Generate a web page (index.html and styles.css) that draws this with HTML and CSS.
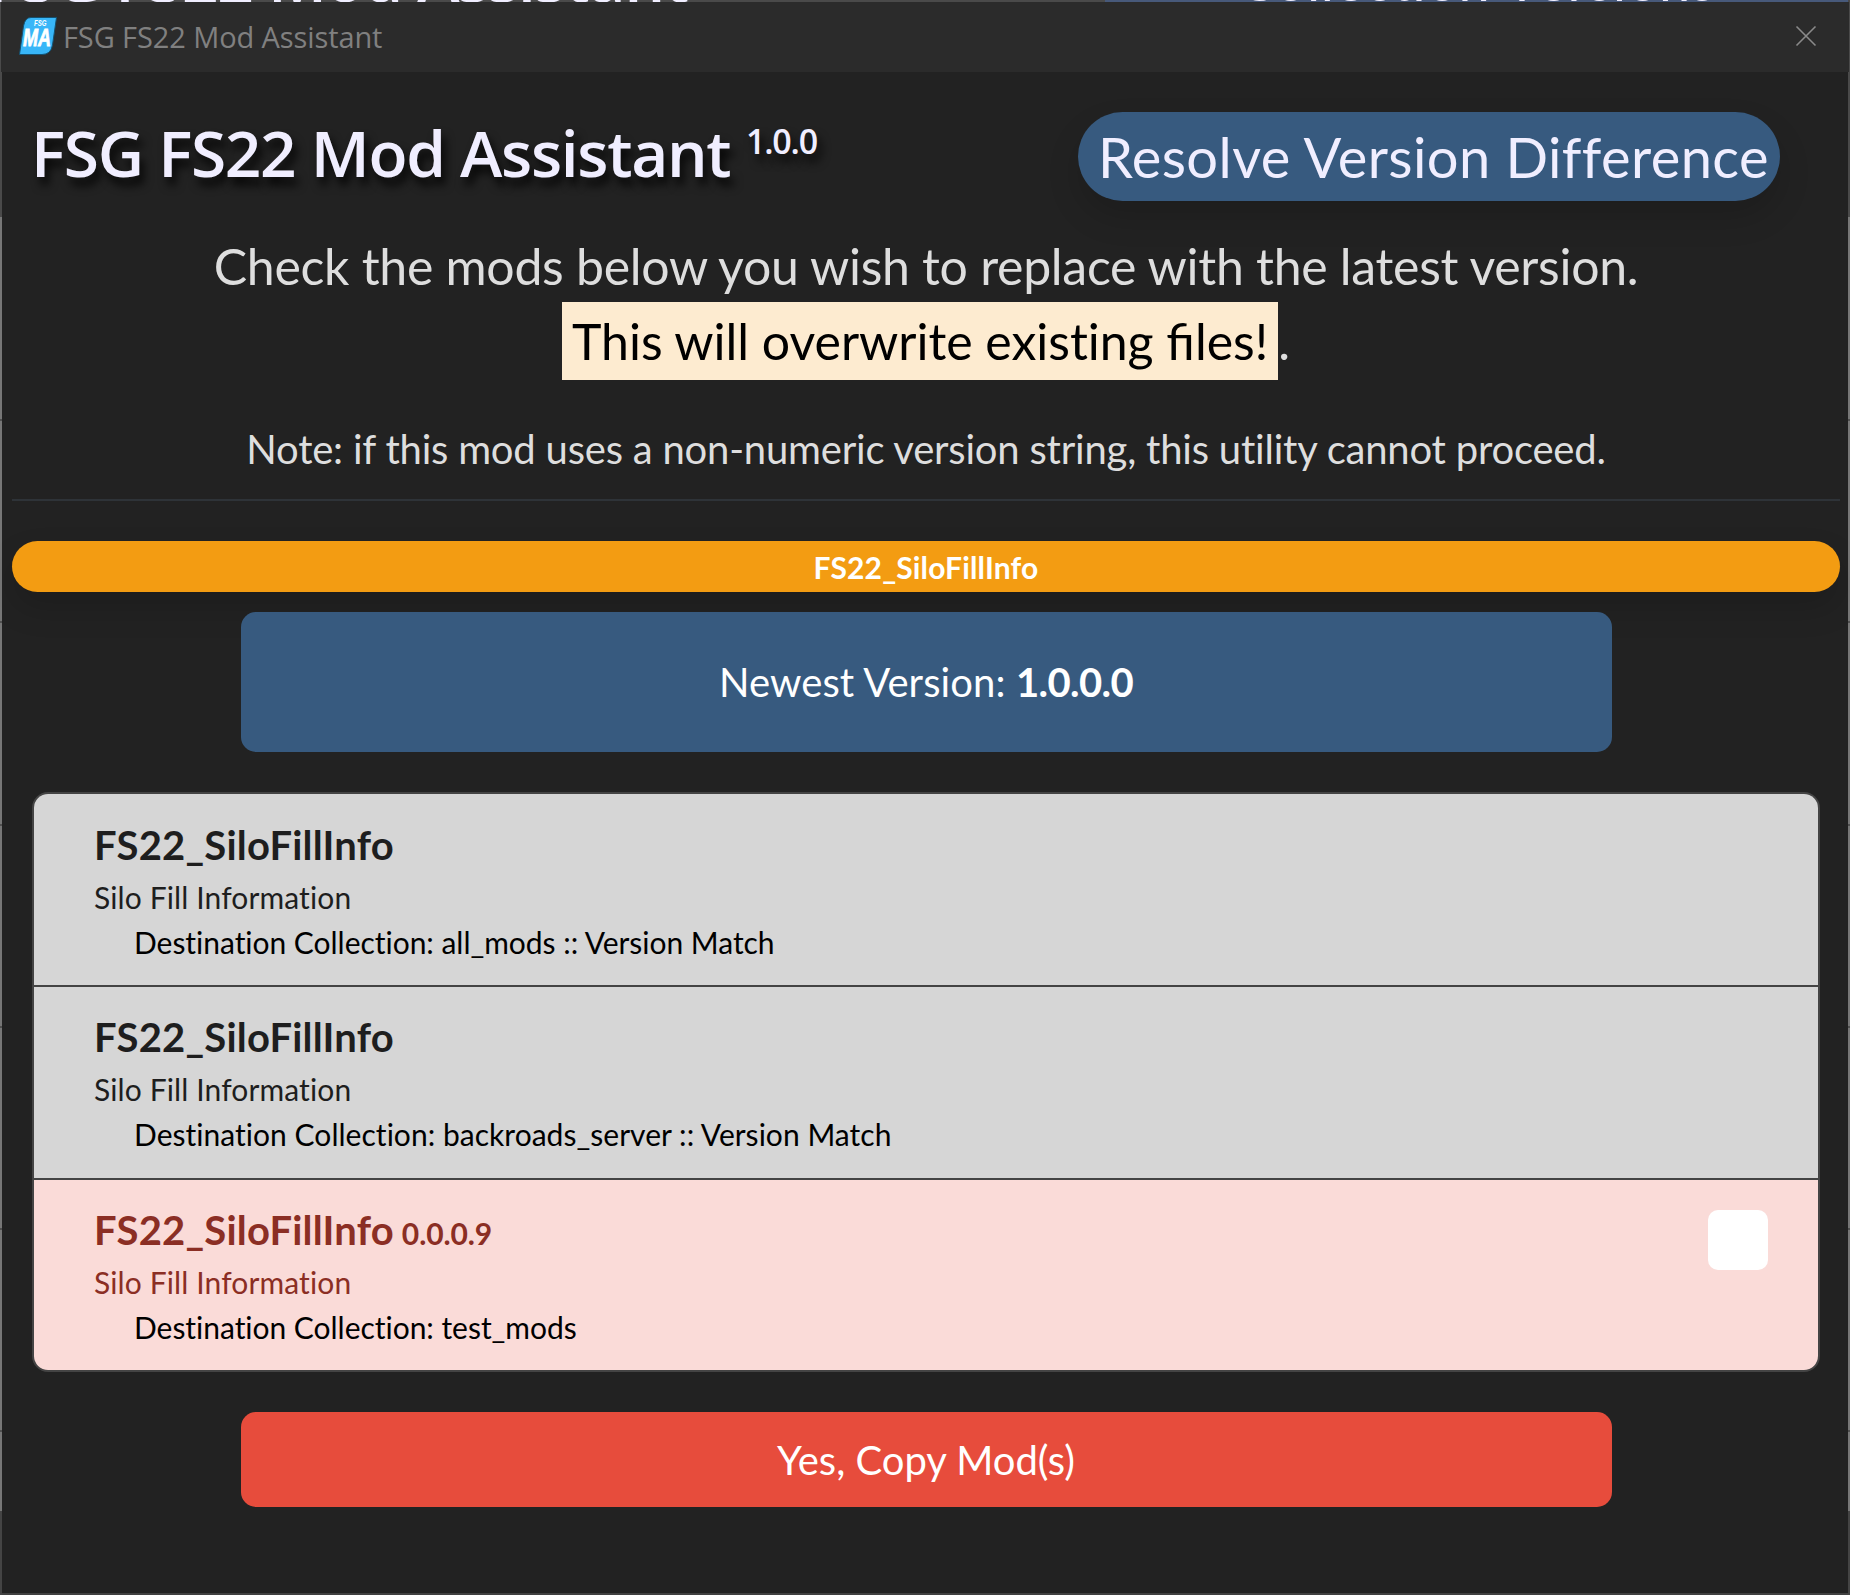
FILE: index.html
```html
<!DOCTYPE html>
<html lang="en">
<head>
<meta charset="utf-8">
<title>FSG FS22 Mod Assistant</title>
<link rel="stylesheet" href="styles.css">
</head>
<body>
<div class="behind" aria-hidden="true">
  <div class="behind-title">FSG FS22 Mod Assistant</div>
  <div class="behind-pill">Collection Versions</div>
</div>
<div class="window">
  <header class="titlebar">
    <svg class="logo" width="40" height="40" viewBox="0 0 40 40">
      <path d="M13 1.5H38.5L34.5 29Q33 38.5 24 38.5H1.5L5.5 10Q7 1.5 13 1.5Z" fill="#38b6f8" stroke="#14506f" stroke-width="1"/>
      <text class="logo-top" x="16" y="10" textLength="12.5" lengthAdjust="spacingAndGlyphs">FSG</text>
      <text class="logo-main" x="5" y="30" textLength="28" lengthAdjust="spacingAndGlyphs">MA</text>
    </svg>
    <span class="titlebar-text">FSG FS22 Mod Assistant</span>
    <svg class="close" width="22" height="22" viewBox="0 0 22 22">
      <path d="M1.5 1.5L20.5 20.5M20.5 1.5L1.5 20.5" stroke="#8a8a8a" stroke-width="1.6" fill="none"/>
    </svg>
  </header>
  <main class="content">
    <div class="heading">
      <h1>FSG FS22 Mod Assistant</h1>
      <span class="version">1.0.0</span>
      <div class="pill">Resolve Version Difference</div>
    </div>
    <p class="lead"><span class="lead-line">Check the mods below you wish to replace with the latest version.</span><br><mark>This will overwrite existing <span class="liga">files!</span></mark>.</p>
    <p class="note">Note: if this mod uses a non-numeric version string, this utility cannot proceed.</p>
    <hr>
    <div class="badge">FS22_SiloFillInfo</div>
    <div class="newest"><span>Newest Version: <b>1.0.0.0</b></span></div>
    <ul class="mods">
      <li class="mod">
        <div class="info">
          <h2>FS22_SiloFillInfo</h2>
          <div class="desc">Silo Fill Information</div>
          <div class="dest">Destination Collection: all_mods :: Version Match</div>
        </div>
      </li>
      <li class="mod">
        <div class="info">
          <h2>FS22_SiloFillInfo</h2>
          <div class="desc">Silo Fill Information</div>
          <div class="dest wide">Destination Collection: backroads_server :: Version Match</div>
        </div>
      </li>
      <li class="mod old">
        <div class="info">
          <h2>FS22_SiloFillInfo <small>0.0.0.9</small></h2>
          <div class="desc">Silo Fill Information</div>
          <div class="dest">Destination Collection: test_mods</div>
        </div>
        <input class="check" type="checkbox">
      </li>
    </ul>
    <button class="copy">Yes, Copy Mod(s)</button>
  </main>
</div>
</body>
</html>
```
FILE: styles.css
```css
* { box-sizing: border-box; }
body {
  margin: 0;
  width: 1850px;
  height: 1595px;
  overflow: hidden;
  display: flex;
  flex-direction: column;
  font-family: Lato, sans-serif;
  font-variant-ligatures: none;
  background: linear-gradient(#4a4a4a 217px, #777 217px, #777 419px, #505050 419px, #505050 421px, #777 421px, #777 621px, #505050 621px, #505050 623px, #777 623px, #777 824px, #505050 824px, #505050 826px, #777 826px, #777 1026px, #505050 1026px, #505050 1028px, #777 1028px, #777 1228px, #505050 1228px, #505050 1230px, #777 1230px, #777 1430px, #505050 1430px, #505050 1432px, #777 1432px, #777 1511px, #444 1511px);
}
h1, h2, p, ul { margin: 0; padding: 0; }

/* sliver of the parent window above the dialog */
.behind {
  height: 2px;
  flex: none;
  overflow: hidden;
  display: flex;
  align-items: flex-end;
  justify-content: space-between;
  background: #4a4a4a;
  color: #f0eeff;
  white-space: nowrap;
}
.behind-title {
  margin: 0 0 -27px -12px;
  font: 600 64px/77px "Open Sans", sans-serif;
  letter-spacing: -1.28px;
  height: 90px;
}
.behind-pill {
  width: 743px;
  height: 88px;
  margin: 0 2px -22px 0;
  text-align: center;
  background: #47597a;
  font-size: 56px;
  line-height: 88px;
  letter-spacing: .5px;
}

.window {
  flex: none;
  height: 1593px;
  margin: 0 2px;
  background: #222;
  border-bottom: 2px solid #404040;
}
.titlebar {
  height: 70px;
  margin: 0 -1px;
  padding: 0 32px 0 17px;
  display: flex;
  align-items: center;
  background: #2b2b2b;
}
.logo { margin-bottom: 2px; }
.logo-top { font: italic 700 9px "Liberation Sans", sans-serif; fill: #fff; }
.logo-main { font: italic 700 24px "Liberation Sans", sans-serif; fill: #fff; stroke: #fff; stroke-width: .8px; }
.titlebar-text {
  flex: 1;
  margin: 0 0 0 5px;
  font: 29px/40px "Open Sans", sans-serif;
  letter-spacing: -.1px;
  color: #808080;
}
.close { margin: 0 0 2px; }

.content { padding: 0 8px 0 10px; }
.heading {
  height: 157px;
  padding: 40px 60px 0 19px;
  display: flex;
  align-items: flex-start;
  color: #f0eeff;
}
h1 {
  width: 700px;
  margin-top: 2px;
  font: 600 64px/77px "Open Sans", sans-serif;
  letter-spacing: -1.3px;
  text-shadow: 4px 8px 10px rgba(0, 0, 0, .85);
  white-space: nowrap;
}
.version {
  flex: 1;
  margin: 9px 0 0 15px;
  font: 600 34px/40px "Open Sans", sans-serif;
  letter-spacing: -1.2px;
  text-shadow: 4px 8px 10px rgba(0, 0, 0, .85);
}
.pill {
  width: 702px;
  height: 89px;
  padding-left: 20px;
  border-radius: 45px;
  background: #375a7f;
  box-shadow: 0 16px 32px rgba(0, 0, 0, .15);
  font-size: 56px;
  line-height: 89px;
  letter-spacing: .43px;
  white-space: nowrap;
}
.lead {
  font-size: 50px;
  line-height: 75px;
  text-align: center;
  color: #dedede;
}
.lead-line { letter-spacing: -.3px; }
mark {
  padding: 9px 10px;
  background: #fdebd0;
  color: #000;
  letter-spacing: -.03px;
}
.liga { font-variant-ligatures: common-ligatures; font-feature-settings: "liga" 1; }
.note {
  margin: 40px 0 20px;
  font-size: 40px;
  line-height: 60px;
  letter-spacing: -.21px;
  text-align: center;
  color: #dedede;
}
hr {
  height: 2px;
  margin: 0 0 40px;
  border: 0;
  background: #2e3338;
}
.badge {
  height: 51px;
  margin-bottom: 20px;
  border-radius: 26px;
  background: #f39c12;
  box-shadow: 0 16px 32px rgba(0, 0, 0, .15);
  color: #fff;
  font-size: 30px;
  font-weight: 700;
  line-height: 53px;
  letter-spacing: .14px;
  text-align: center;
}
.newest, .copy {
  display: flex;
  align-items: center;
  justify-content: center;
  width: 1371px;
  margin: 0 auto;
  border: 0;
  border-radius: 15px;
  color: #fff;
  font: 40px/60px Lato, sans-serif;
}
.newest { position: relative; height: 140px; background: #375a7f; letter-spacing: .1px; }
.newest b { letter-spacing: -.6px; }
.mods {
  list-style: none;
  margin: 40px 20px;
  border: 2px solid #444;
  border-radius: 16px;
  overflow: hidden;
}
.mod {
  display: flex;
  justify-content: space-between;
  height: 193px;
  padding: 26px 50px 0 60px;
  background: #d6d6d6;
  color: #1e1e1e;
  border-bottom: 2px solid #444;
}
.mod:first-child { padding-top: 27px; }
.mod.old { height: 190px; border-bottom: 0; background: #fadbd8; color: #8b2e24; }
h2 {
  height: 48px;
  margin-bottom: 6px;
  font-size: 40px;
  font-weight: 700;
  line-height: 48px;
  letter-spacing: .2px;
}
h2 small { font-size: 30px; line-height: 1; letter-spacing: -.1px; margin-left: -2px; }
.desc, .dest { font-size: 30px; line-height: 45px; }
.desc { letter-spacing: .12px; }
.dest { padding-left: 40px; color: #000; letter-spacing: -.03px; }
.dest.wide { letter-spacing: .03px; }
.check {
  appearance: none;
  width: 60px;
  height: 60px;
  margin: 4px 0 0;
  border-radius: 10px;
  background: #fff;
}
.copy { height: 95px; background: #e74c3c; }
```
